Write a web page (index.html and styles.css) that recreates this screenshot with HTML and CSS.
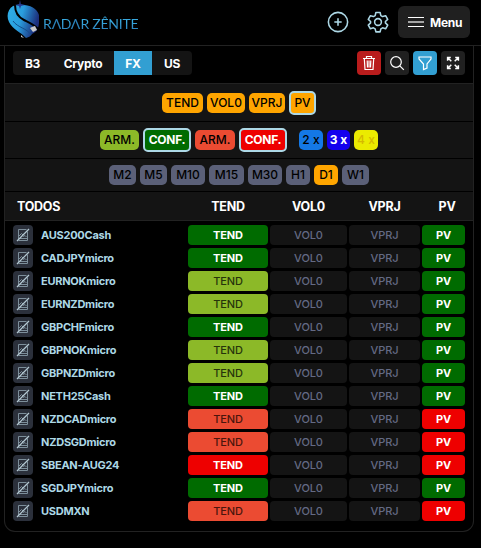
FILE: index.html
```html
<!DOCTYPE html>
<html lang="pt-BR">
<head>
    <meta charset="UTF-8">
    <meta name="viewport" content="width=device-width, initial-scale=1.0">
    <title>Radar Zênite</title>
    <link rel="stylesheet" href="styles.css">
</head>
<body>

<!-- Header -->
<header class="header">
    <div class="brand">
        <svg class="brand-mark" viewBox="0 0 34 40">
            <defs>
                <linearGradient id="wave" x1="0" y1="0" x2="1" y2=".3">
                    <stop offset="0" stop-color="#2fb0e8"/>
                    <stop offset=".5" stop-color="#2a9ddd"/>
                    <stop offset="1" stop-color="#1c2f7c"/>
                </linearGradient>
            </defs>
            <path fill="url(#wave)" d="M6 6C1 9-1 16 2 22c4 8 12 10 17 16 3-1 5-2 6-4 5-2 7-7 7-12V15C30 8 22 4 10 5z"/>
            <path class="gap" d="M8 5c0 8 3 12 9 15 6 3 11 5 15 10"/>
            <path class="gap thin" d="M6 21c5 7 14 7 18 14"/>
            <path fill="#c9c9c9" d="M23 28c2-1 4-2 5-2l2 4-4 2zM14 35l3 3-3-1z"/>
            <path fill="#243c92" d="M13 0l.8 4 4.200 1-4 1-1 3-1-3-4-1 4.200-1z"/>
        </svg>
        <span class="brand-name">R<i>V</i>D<i>V</i>R ZÊNITE</span>
    </div>
    <div class="header-actions">
        <svg class="header-icon" viewBox="0 0 24 24"><circle cx="12" cy="12" r="10.5"/><path d="M12 8v8M8 12h8"/></svg>
        <svg class="header-icon" viewBox="0 0 24 24"><circle cx="12" cy="12" r="3.7"/><path d="M9.7 1.7h4.6l.8 3.3 1.9 1.1 3.3-1 2.3 4-2.5 2.3v1.6l2.5 2.4-2.3 4-3.3-1-1.9 1.1-.8 3.3H9.7l-.8-3.3L7 18.400l-3.300 1-2.300-4L3.900 13v-1.600L1.400 9.100l2.300-4 3.300 1L8.900 5z"/></svg>
        <button class="menu-btn">
            <svg viewBox="0 0 16 12"><path d="M0 1.500h16M0 10.500h16"/><path class="mid" d="M0 6h16"/></svg>
            Menu
        </button>
    </div>
</header>

<main class="panel">

    <!-- Markets and tools -->
    <div class="toolbar">
        <div class="tabs">
            <button class="tab tab-b3">B3</button>
            <button class="tab tab-crypto">Crypto</button>
            <button class="tab tab-fx active">FX</button>
            <button class="tab tab-us">US</button>
        </div>
        <div class="tools">
            <button class="tool danger"><svg viewBox="0 0 16 16"><path d="M2 3.500h12M5.500 3V1.500h5V3M3.300 3.500l.7 11h8l.7-11M6.200 5.500l.3 7M8 5.500v7M9.800 5.500l-.3 7"/></svg></button>
            <button class="tool"><svg viewBox="0 0 16 16"><circle cx="7" cy="7" r="5.300"/><path d="M10.800 10.800l4 4"/></svg></button>
            <button class="tool active"><svg viewBox="0 0 16 16"><path d="M2 2h12v2L10 9v4l-3.500 1.500V9L2 4z"/></svg></button>
            <button class="tool"><svg viewBox="0 0 16 16"><path class="arrows" d="M6.300 6.300L2.800 2.800M9.700 6.300l3.500-3.500M6.300 9.700l-3.500 3.500M9.700 9.700l3.500 3.500M2.600 5.800V2.600h3.200M10.200 2.600h3.200v3.200M2.600 10.200v3.200h3.200M10.200 13.400h3.200v-3.200"/></svg></button>
        </div>
    </div>

    <!-- Filters -->
    <div class="filters filters-signal">
        <button class="chip orange w41">TEND</button>
        <button class="chip orange w38">VOL0</button>
        <button class="chip orange w36">VPRJ</button>
        <button class="chip orange selected w27">PV</button>
    </div>
    <div class="filters filters-state">
        <button class="chip lime w39">ARM.</button>
        <button class="chip green selected w48">CONF.</button>
        <button class="chip coral w40">ARM.</button>
        <button class="chip red selected w48">CONF.</button>
        <button class="chip blue first-multi w24">2 x</button>
        <button class="chip indigo w23">3 x</button>
        <button class="chip yellow w24">4 x</button>
    </div>
    <div class="filters filters-time">
        <button class="chip w27">M2</button>
        <button class="chip w27">M5</button>
        <button class="chip w34">M10</button>
        <button class="chip w35">M15</button>
        <button class="chip w34">M30</button>
        <button class="chip w24">H1</button>
        <button class="chip orange w24">D1</button>
        <button class="chip w27">W1</button>
    </div>

    <!-- Signals -->
    <div class="table-head">
        <span class="head-all">TODOS</span>
        <span>TEND</span>
        <span>VOL0</span>
        <span>VPRJ</span>
        <span>PV</span>
    </div>
    <div class="rows" id="rows"></div>
</main>

<script>
const assets = [
    ['AUS200Cash', 'green', 'green'],
    ['CADJPYmicro', 'green', 'green'],
    ['EURNOKmicro', 'lime', 'green'],
    ['EURNZDmicro', 'lime', 'green'],
    ['GBPCHFmicro', 'green', 'green'],
    ['GBPNOKmicro', 'lime', 'green'],
    ['GBPNZDmicro', 'lime', 'green'],
    ['NETH25Cash', 'green', 'green'],
    ['NZDCADmicro', 'coral', 'red'],
    ['NZDSGDmicro', 'coral', 'red'],
    ['SBEAN-AUG24', 'red', 'red'],
    ['SGDJPYmicro', 'green', 'green'],
    ['USDMXN', 'coral', 'red']
];

// chart icon with a slash: no chart open for the asset
const chartIcon = '<svg viewBox="0 0 14 14"><path d="M10.500 1.500h-8v9M2.500 12.500h9v-9M2.500 8.500l3-3 1.500 1.500M7 8.500l2-1 1.500 1.500M2 10.500h10"/><path class="slash" d="M1 13L13 1"/></svg>';

document.getElementById('rows').innerHTML = assets.map(([name, tend, pv]) => `
    <div class="row">
        <button class="chart-btn">${chartIcon}</button>
        <span class="asset">${name}</span>
        <span class="cell ${tend}">TEND</span>
        <span class="cell">VOL0</span>
        <span class="cell">VPRJ</span>
        <span class="cell ${pv}">PV</span>
    </div>`).join('');
</script>

</body>
</html>
```
FILE: styles.css
```css
* {
    margin: 0;
    padding: 0;
    box-sizing: border-box;
}

body {
    background: #000;
    color: #fff;
    font-family: Inter, "Liberation Sans", sans-serif;
    font-size: 12px;
    height: 548px;
    overflow: hidden;
}

button {
    border: none;
    font: inherit;
    color: inherit;
    white-space: nowrap;
}

svg {
    display: block;
    fill: none;
    stroke: currentColor;
}

/* Header */
.header {
    display: flex;
    justify-content: space-between;
    height: 46px;
    padding: 0 11px 0 7px;
    border-bottom: 1px solid #222;
}

.brand {
    display: flex;
}

.brand-mark {
    width: 34px;
    height: 40px;
    stroke: none;
}

.brand-mark .gap {
    stroke: #000;
    stroke-width: 2;
}

.brand-mark .thin {
    stroke: #14508c;
    stroke-width: 1;
}

.brand-name {
    margin: 14px 0 0 2px;
    font-family: Lato, sans-serif;
    font-size: 14px;
    line-height: 20px;
    letter-spacing: -0.25px;
    white-space: nowrap;
    background: linear-gradient(#38a9df 25%, #1d4f91 85%);
    background-clip: text;
    -webkit-background-clip: text;
    color: transparent;
}

.brand-name i {
    display: inline-block;
    font-style: normal;
    transform: rotate(180deg);
    color: #2b80b8;
}

.header-actions {
    display: flex;
    align-items: center;
    height: 44px;
}

.header-icon {
    width: 22px;
    height: 22px;
    margin-right: 18px;
    color: #add8e6;
    stroke-width: 1.7;
    stroke-linejoin: round;
}

.header-icon + .menu-btn {
    margin-left: -9px;
}

.menu-btn {
    display: flex;
    align-items: center;
    gap: 6px;
    width: 72px;
    height: 32px;
    padding-left: 10px;
    border-radius: 6px;
    background: #202020;
    font-size: 12px;
    font-weight: 700;
    letter-spacing: -0.3px;
}

.menu-btn svg {
    width: 16px;
    height: 12px;
}

.menu-btn .mid {
    stroke-width: 2;
    opacity: 0.6;
}

/* Panel */
.panel {
    width: 470px;
    height: 486px;
    margin-left: 4px;
    border: 1px solid #222;
    border-top: none;
    border-radius: 0 0 11px 11px;
}

.toolbar {
    display: flex;
    justify-content: space-between;
    height: 38px;
    padding: 5px 8px;
    border-bottom: 1px solid #222;
}

.tabs {
    display: flex;
    height: 24px;
    border-radius: 4px;
    background: #141414;
    overflow: hidden;
}

.tab {
    background: none;
    font-weight: 700;
    letter-spacing: -0.3px;
}

.tab.active {
    background: #329fd2;
}

.tab-b3 { width: 39px; }
.tab-crypto { width: 62px; }
.tab-fx { width: 38px; }
.tab-us { width: 40px; }

.tools {
    display: flex;
    gap: 4px;
}

.tool {
    display: flex;
    align-items: center;
    justify-content: center;
    width: 24px;
    height: 24px;
    border-radius: 4px;
    background: #202020;
}

.tool svg {
    width: 16px;
    height: 16px;
    stroke-width: 1.2;
}

.tool .arrows {
    stroke-width: 1.5;
}

.tool.danger {
    background: #b91c1c;
}

.tool.active {
    background: #329fd2;
}

/* Filters */
.filters {
    display: flex;
    align-items: center;
    justify-content: center;
    gap: 4px;
    background: #141414;
    border-bottom: 1px solid #000;
}

.filters-signal { height: 38px; }
.filters-state { height: 37px; }
.filters-time { height: 33px; }

.chip {
    height: 20px;
    border-radius: 5px;
    background: #5b6078;
    color: #000;
    font-size: 12px;
    font-weight: 500;
    line-height: 20px;
    text-align: center;
}

.chip.selected {
    height: 24px;
    border: 2px solid #add8e6;
}

.first-multi {
    margin-left: 8px;
}

.w23 { width: 23px; }
.w24 { width: 24px; }
.w27 { width: 27px; }
.w34 { width: 34px; }
.w35 { width: 35px; }
.w36 { width: 36px; }
.w38 { width: 38px; }
.w39 { width: 39px; }
.w40 { width: 40px; }
.w41 { width: 41px; }
.w48 { width: 48px; }

.orange { background: #ffa500; }
.blue { background: #1478e6; }
.indigo { background: #1400ee; color: #fff; font-weight: 700; }
.yellow { background: #ebeb00; color: #d5b900; }
.chip.green, .chip.red { color: #fff; font-weight: 700; letter-spacing: -0.3px; }

/* Table */
.table-head,
.row {
    display: grid;
    grid-template-columns: 173px 80px 77px 71px 50px;
    column-gap: 2px;
    align-items: center;
}

.table-head {
    height: 29px;
    padding-left: 8px;
    background: #141414;
    border-bottom: 1px solid #222;
    font-size: 12.5px;
    font-weight: 700;
    letter-spacing: -0.25px;
    text-align: center;
}

.table-head .head-all {
    padding-left: 4px;
    text-align: left;
}

.rows {
    display: grid;
    row-gap: 3px;
    padding: 4px 8px;
}

.row {
    grid-template-columns: 20px 151px 80px 77px 71px 43px;
    height: 20px;
}

.chart-btn {
    display: flex;
    align-items: center;
    justify-content: center;
    width: 20px;
    height: 20px;
    border-radius: 4px;
    background: #2b303b;
    color: #7d8f9b;
}

.chart-btn svg {
    width: 14px;
    height: 14px;
    stroke-width: 1;
}

.chart-btn .slash {
    stroke: #b4c8d2;
    stroke-width: 1.2;
}

.asset {
    padding-left: 6px;
    color: #add8e6;
    font-size: 11px;
    font-weight: 700;
    letter-spacing: -0.25px;
}

.cell {
    height: 20px;
    border-radius: 4px;
    background: #141414;
    color: #646a84;
    font-size: 11px;
    font-weight: 500;
    letter-spacing: -0.1px;
    line-height: 20px;
    text-align: center;
}

.cell.green,
.cell.red {
    color: #fff;
    font-weight: 700;
}

.green, .cell.green { background: #006b00; }
.lime, .cell.lime { background: #8cb928; }
.coral, .cell.coral { background: #eb4b32; }
.red, .cell.red { background: #ee0000; }

.cell.lime { color: #27340b; }
.cell.coral { color: #4a150d; }
```
